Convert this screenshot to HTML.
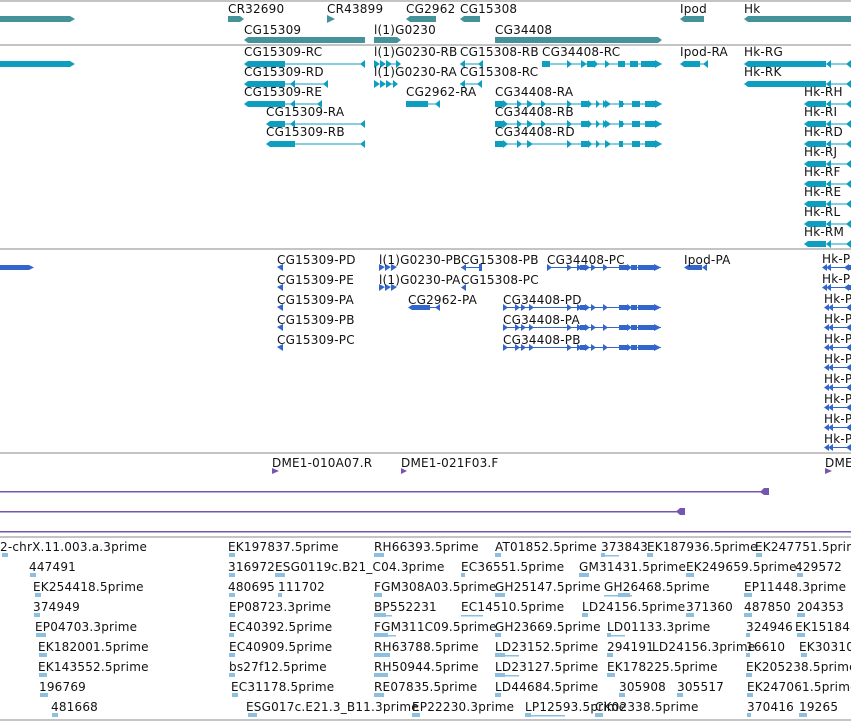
<!DOCTYPE html>
<html><head><meta charset="utf-8"><style>
html,body{margin:0;padding:0;background:#fff;width:851px;height:721px;overflow:hidden}
svg{display:block}
text{font-family:"DejaVu Sans","Liberation Sans",sans-serif;font-size:12px;fill:#111;letter-spacing:0.2px}
</style></head><body>
<svg width="851" height="721" viewBox="0 0 851 721" xmlns="http://www.w3.org/2000/svg">
<g fill="#c4c4c4">
<rect x="0" y="0" width="851" height="2"/>
<rect x="0" y="44" width="851" height="2"/>
<rect x="0" y="248" width="851" height="2"/>
<rect x="0" y="452" width="851" height="2"/>
<rect x="0" y="536" width="851" height="2"/>
<rect x="0" y="719" width="851" height="2"/>
</g>

<g fill="#44939a">
<rect x="0" y="16" width="70" height="6"/><polygon points="70,16 75,19 70,22"/>
<rect x="228" y="16" width="12" height="6"/><polygon points="240,16 244,19 240,22"/>
<polygon points="327,15 335,19 327,23"/>
<rect x="410" y="16" width="26" height="6"/><polygon points="410,16 406,19 410,22"/>
<rect x="464" y="16" width="16" height="6"/><polygon points="464,16 460,19 464,22"/>
<rect x="684" y="16" width="20" height="6"/><polygon points="684,16 680,19 684,22"/>
<rect x="748" y="16" width="103" height="6"/><polygon points="748,16 744,19 748,22"/>
<rect x="248" y="37" width="117" height="6"/><polygon points="248,37 244,40 248,43"/>
<rect x="374" y="37" width="23" height="6"/><polygon points="397,37 401,40 397,43"/>
<rect x="495" y="37" width="163" height="6"/><polygon points="658,37 662,40 658,43"/>
</g>
<text x="228" y="13">CR32690</text><text x="327" y="13">CR43899</text><text x="406" y="13">CG2962</text><text x="460" y="13">CG15308</text><text x="680" y="13">Ipod</text><text x="744" y="13">Hk</text>
<text x="244" y="34">CG15309</text><text x="374" y="34">l(1)G0230</text><text x="495" y="34">CG34408</text>

<g fill="#0e9fc0">
<rect x="0" y="61" width="70" height="6"/><polygon points="70,61 75,64 70,67"/>
<rect x="248" y="61" width="37" height="6"/><polygon points="248,61 244,64 248,67"/><rect x="285" y="63.5" width="80" height="1"/><polygon points="360,64 365,60 365,68"/>
<rect x="248" y="81" width="37" height="6"/><polygon points="248,81 244,84 248,87"/><rect x="285" y="83.5" width="43" height="1"/><polygon points="290,84 295,80 295,88"/><polygon points="323,84 328,80 328,88"/>
<rect x="248" y="101" width="37" height="6"/><polygon points="248,101 244,104 248,107"/><rect x="285" y="103.5" width="37" height="1"/><polygon points="290,104 295,100 295,108"/><polygon points="317,104 322,100 322,108"/>
<rect x="270" y="121" width="15" height="6"/><polygon points="270,121 266,124 270,127"/><rect x="285" y="123.5" width="80" height="1"/><polygon points="290,124 295,120 295,128"/><polygon points="360,124 365,120 365,128"/>
<rect x="270" y="141" width="25" height="6"/><polygon points="270,141 266,144 270,147"/><rect x="295" y="143.5" width="70" height="1"/><polygon points="360,144 365,140 365,148"/>
<polygon points="374,60 380,64 380,60 386,64 380,68 380,64 374,68"/><polygon points="386,60 392,64 386,68"/><rect x="386" y="63.5" width="11" height="1"/><polygon points="396,60 401,64 396,68"/>
<polygon points="374,80 380,84 380,80 386,84 380,88 380,84 374,88"/><polygon points="386,80 392,84 386,88"/><rect x="386" y="83.5" width="8" height="1"/><polygon points="393,80 398,84 393,88"/>
<rect x="460" y="63.5" width="23" height="1"/><polygon points="460,64 465,60 465,68"/><polygon points="478,64 483,60 483,68"/>
<rect x="460" y="83.5" width="22" height="1"/><polygon points="460,84 465,80 465,88"/><polygon points="477,84 482,80 482,88"/>
<rect x="406" y="101" width="22" height="6"/><rect x="428" y="103.5" width="12" height="1"/><polygon points="435,104 440,100 440,108"/>
<rect x="684" y="61" width="16" height="6"/><polygon points="684,61 680,64 684,67"/><rect x="700" y="63.5" width="8" height="1"/><polygon points="703,64 708,60 708,68"/>
<rect x="542" y="63.5" width="120" height="1"/>
<rect x="542" y="61" width="8" height="6"/><polygon points="567,60 572,64 567,68"/><polygon points="581,60 587,64 581,68"/><rect x="587" y="61" width="7" height="6"/><polygon points="594,60 598,64 594,68"/><polygon points="605,60 610,64 605,68"/><rect x="618" y="61" width="7" height="6"/><rect x="630" y="61" width="8" height="6"/><rect x="641" y="61" width="14" height="6"/><polygon points="655,60 662,64 655,68"/>
</g>
<g fill="#0e9fc0">
<g id="cgA">
<rect x="495" y="103.5" width="167" height="1"/>
<rect x="495" y="101" width="8" height="6"/><polygon points="503,100 508,104 503,108"/><polygon points="517,100 522,104 517,108"/><polygon points="527,100 533,104 527,108"/><polygon points="541,100 546,104 541,108"/><polygon points="567,100 572,104 567,108"/><rect x="581" y="101" width="7" height="6"/><polygon points="588,100 592,104 588,108"/><polygon points="596,100 600,104 596,108"/><polygon points="603,100 607,104 603,108"/><polygon points="605,100 611,104 605,108"/><polygon points="619,100 625,104 619,108"/><rect x="619" y="101" width="4" height="6"/><rect x="632" y="101" width="8" height="6"/><rect x="645" y="101" width="10" height="6"/><polygon points="655,100 662,104 655,108"/>
</g>
<use href="#cgA" y="20"/>
<g transform="translate(0,40)">
<rect x="495" y="103.5" width="167" height="1"/>
<rect x="495" y="101" width="8" height="6"/><polygon points="503,100 508,104 503,108"/><polygon points="517,100 522,104 517,108"/><polygon points="527,100 533,104 527,108"/><polygon points="567,100 572,104 567,108"/><rect x="581" y="101" width="7" height="6"/><polygon points="588,100 592,104 588,108"/><polygon points="596,100 600,104 596,108"/><polygon points="605,100 611,104 605,108"/><rect x="619" y="101" width="4" height="6"/><rect x="632" y="101" width="8" height="6"/><rect x="645" y="101" width="10" height="6"/><polygon points="655,100 662,104 655,108"/>
</g>
<rect x="748" y="81" width="78" height="6"/><polygon points="748,81 744,84 748,87"/><rect x="826" y="83.5" width="25" height="1"/><polygon points="826,84 831,80 831,88"/><polygon points="846,84 851,80 851,88"/>
<rect x="748" y="61" width="78" height="6"/><polygon points="748,61 744,64 748,67"/><rect x="826" y="63.5" width="25" height="1"/><polygon points="826,64 831,60 831,68"/><polygon points="846,64 851,60 851,68"/>
<g id="hkr"><rect x="808" y="101" width="18" height="6"/><polygon points="808,101 804,104 808,107"/><rect x="826" y="103.5" width="25" height="1"/><polygon points="826,104 831,100 831,108"/><polygon points="846,104 851,100 851,108"/></g>
<use href="#hkr" y="20"/><use href="#hkr" y="40"/><use href="#hkr" y="60"/><use href="#hkr" y="80"/><use href="#hkr" y="100"/><use href="#hkr" y="120"/><use href="#hkr" y="140"/>
</g>
<text x="244" y="56">CG15309-RC</text><text x="374" y="56">l(1)G0230-RB</text><text x="460" y="56">CG15308-RB</text><text x="542" y="56">CG34408-RC</text><text x="680" y="56">Ipod-RA</text><text x="744" y="56">Hk-RG</text>
<text x="244" y="76">CG15309-RD</text><text x="374" y="76">l(1)G0230-RA</text><text x="460" y="76">CG15308-RC</text><text x="744" y="76">Hk-RK</text>
<text x="244" y="96">CG15309-RE</text><text x="406" y="96">CG2962-RA</text><text x="495" y="96">CG34408-RA</text><text x="804" y="96">Hk-RH</text>
<text x="266" y="116">CG15309-RA</text><text x="495" y="116">CG34408-RB</text><text x="804" y="116">Hk-RI</text>
<text x="266" y="136">CG15309-RB</text><text x="495" y="136">CG34408-RD</text><text x="804" y="136">Hk-RD</text>
<text x="804" y="156">Hk-RJ</text><text x="804" y="176">Hk-RF</text><text x="804" y="196">Hk-RE</text><text x="804" y="216">Hk-RL</text><text x="804" y="236">Hk-RM</text>

<g fill="#3366cc">
<rect x="0" y="265" width="29" height="5"/><polygon points="29,265 34,267.5 29,270"/>
<polygon points="277,267 283,264 283,271"/><polygon points="277,287 283,284 283,291"/><polygon points="277,307 283,304 283,311"/><polygon points="277,327 283,324 283,331"/><polygon points="277,347 283,344 283,351"/>
<polygon points="379,264 385,267 385,264 391,267 385,271 385,267 379,271"/><polygon points="391,264 397,267 391,271"/>
<polygon points="379,284 385,287 385,284 391,287 385,291 385,287 379,291"/><polygon points="391,284 397,287 391,291"/>
<rect x="461" y="267" width="21" height="1"/><polygon points="461,267.5 466,264 466,271"/><rect x="479" y="264" width="3" height="7"/>
<polygon points="461,287.5 466,284 466,291"/>
<rect x="412" y="305" width="18" height="5"/><polygon points="412,305 408,307.5 412,310"/><rect x="430" y="307" width="10" height="1"/><polygon points="435,307.5 440,304 440,311"/>
<rect x="688" y="265" width="14" height="5"/><polygon points="688,265 684,267.5 688,270"/><polygon points="702,267.5 707,264 707,271"/>
<g id="pc"><rect x="547" y="267" width="114" height="1"/><polygon points="547,264 552,267.5 547,271"/><polygon points="567,264 572,267.5 567,271"/><polygon points="577,264 582,267.5 577,271"/><rect x="580" y="265" width="5" height="5"/><polygon points="585,264 590,267.5 585,271"/><polygon points="591,264 596,267.5 591,271"/><polygon points="603,264 608,267.5 603,271"/><rect x="619" y="265" width="8" height="5"/><polygon points="627,264 632,267.5 627,271"/><rect x="631" y="265" width="6" height="5"/><rect x="638" y="265" width="16" height="5"/><polygon points="654,264 661,267.5 654,271"/></g>
<g id="pd"><rect x="503" y="307" width="158" height="1"/><polygon points="503,304 508,307.5 503,311"/><polygon points="515,304 520,307.5 515,311"/><polygon points="521,304 526,307.5 521,311"/><polygon points="529,304 534,307.5 529,311"/><polygon points="567,304 572,307.5 567,311"/><polygon points="577,304 582,307.5 577,311"/><rect x="580" y="305" width="5" height="5"/><polygon points="585,304 590,307.5 585,311"/><polygon points="591,304 596,307.5 591,311"/><polygon points="603,304 608,307.5 603,311"/><rect x="619" y="305" width="8" height="5"/><polygon points="627,304 632,307.5 627,311"/><rect x="631" y="305" width="6" height="5"/><rect x="638" y="305" width="16" height="5"/><polygon points="654,304 661,307.5 654,311"/></g>
<use href="#pd" y="20"/><use href="#pd" y="40"/>
<g id="hp"><polygon points="822,267.5 827,264 827,271"/><polygon points="826,267.5 831,264 831,271"/><rect x="831" y="267" width="20" height="1"/><polygon points="844,267.5 849,264 849,271"/><rect x="848" y="265" width="3" height="5"/></g>
<use href="#hp" y="20"/><use href="#hp" x="2" y="40"/><use href="#hp" x="2" y="60"/><use href="#hp" x="2" y="80"/><use href="#hp" x="2" y="100"/><use href="#hp" x="2" y="120"/><use href="#hp" x="2" y="140"/><use href="#hp" x="2" y="160"/><use href="#hp" x="2" y="180"/>
</g>
<text x="277" y="264">CG15309-PD</text><text x="379" y="264">l(1)G0230-PB</text><text x="461" y="264">CG15308-PB</text><text x="547" y="264">CG34408-PC</text><text x="684" y="264">Ipod-PA</text>
<text x="277" y="284">CG15309-PE</text><text x="379" y="284">l(1)G0230-PA</text><text x="461" y="284">CG15308-PC</text>
<text x="277" y="304">CG15309-PA</text><text x="408" y="304">CG2962-PA</text><text x="503" y="304">CG34408-PD</text>
<text x="277" y="324">CG15309-PB</text><text x="503" y="324">CG34408-PA</text>
<text x="277" y="344">CG15309-PC</text><text x="503" y="344">CG34408-PB</text>
<text x="822" y="263">Hk-PG</text><text x="822" y="283">Hk-PK</text><text x="824" y="303">Hk-PH</text><text x="824" y="323">Hk-PI</text><text x="824" y="343">Hk-PD</text><text x="824" y="363">Hk-PJ</text><text x="824" y="383">Hk-PF</text><text x="824" y="403">Hk-PE</text><text x="824" y="423">Hk-PL</text><text x="824" y="443">Hk-PM</text>

<g fill="#7455b0">
<polygon points="272,468 279,471 272,474"/><polygon points="401,468 407,471 401,474"/><polygon points="825,468 832,471 825,474"/>
<rect x="0" y="491" width="762" height="1.5"/><polygon points="760,492 764,488 769,488 769,495 764,495"/>
<rect x="0" y="511" width="680" height="1.5"/><polygon points="676,511.5 680,508 685,508 685,515 680,515"/>
<rect x="0" y="531" width="851" height="1.5"/>
</g>
<text x="272" y="467">DME1-010A07.R</text><text x="401" y="467">DME1-021F03.F</text><text x="825" y="467">DME1</text>

<g fill="#8cbfe0">
<rect x="2" y="553" width="6" height="4"/><rect x="30" y="573" width="6" height="4"/><rect x="35" y="593" width="6" height="4"/><rect x="34" y="613" width="6" height="4"/><rect x="36" y="633" width="10" height="4"/><rect x="39" y="653" width="8" height="4"/><rect x="39" y="673" width="8" height="4"/><rect x="40" y="693" width="8" height="4"/><rect x="52" y="713" width="6" height="4"/>
<rect x="229" y="553" width="6" height="4"/><rect x="229" y="573" width="6" height="4"/><rect x="275" y="573" width="10" height="4"/><rect x="229" y="593" width="6" height="4"/><rect x="278" y="593" width="4" height="4"/><rect x="229" y="613" width="6" height="4"/><rect x="229" y="633" width="5" height="4"/><rect x="229" y="653" width="6" height="4"/><rect x="229" y="673" width="6" height="4"/><rect x="232" y="693" width="6" height="4"/><rect x="248" y="713" width="9" height="4"/>
<rect x="374" y="553" width="10" height="4"/><rect x="461" y="573" width="4" height="4"/><rect x="374" y="593" width="8" height="4"/><rect x="374" y="615" width="18" height="1.5"/><rect x="374" y="613" width="12" height="4"/><rect x="461" y="615" width="22" height="1.5"/><rect x="374" y="635" width="22" height="1.5"/><rect x="374" y="633" width="14" height="4"/><rect x="374" y="653" width="16" height="4"/><rect x="374" y="673" width="14" height="4"/><rect x="374" y="693" width="10" height="4"/><rect x="412" y="713" width="8" height="4"/>
<rect x="495" y="553" width="6" height="4"/><rect x="495" y="593" width="10" height="4"/><rect x="495" y="633" width="6" height="4"/><rect x="495" y="655" width="24" height="1.5"/><rect x="495" y="653" width="10" height="4"/><rect x="495" y="675" width="24" height="1.5"/><rect x="495" y="673" width="10" height="4"/><rect x="495" y="693" width="6" height="4"/><rect x="525" y="715" width="40" height="1.5"/><rect x="525" y="713" width="6" height="4"/><rect x="595" y="713" width="8" height="4"/>
<rect x="601" y="555" width="18" height="1.5"/><rect x="601" y="553" width="4" height="4"/><rect x="647" y="553" width="6" height="4"/><rect x="756" y="553" width="6" height="4"/><rect x="579" y="573" width="10" height="4"/><rect x="686" y="573" width="8" height="4"/><rect x="797" y="573" width="6" height="4"/><rect x="604" y="595" width="28" height="1.5"/><rect x="618" y="593" width="12" height="4"/><rect x="744" y="593" width="8" height="4"/><rect x="582" y="613" width="6" height="4"/><rect x="686" y="613" width="8" height="4"/><rect x="744" y="613" width="8" height="4"/><rect x="797" y="613" width="8" height="4"/><rect x="607" y="635" width="18" height="1.5"/><rect x="607" y="633" width="4" height="4"/><rect x="746" y="633" width="4" height="4"/><rect x="797" y="633" width="8" height="4"/><rect x="607" y="653" width="6" height="4"/><rect x="746" y="653" width="4" height="4"/><rect x="801" y="653" width="6" height="4"/><rect x="607" y="673" width="8" height="4"/><rect x="746" y="673" width="6" height="4"/><rect x="619" y="693" width="6" height="4"/><rect x="677" y="693" width="6" height="4"/><rect x="747" y="693" width="6" height="4"/><rect x="747" y="713" width="4" height="4"/><rect x="799" y="713" width="8" height="4"/>
</g>
<text x="0" y="551">2-chrX.11.003.a.3prime</text><text x="29" y="571">447491</text><text x="33" y="591">EK254418.5prime</text><text x="33" y="611">374949</text><text x="35" y="631">EP04703.3prime</text><text x="38" y="651">EK182001.5prime</text><text x="38" y="671">EK143552.5prime</text><text x="39" y="691">196769</text><text x="51" y="711">481668</text>
<text x="228" y="551">EK197837.5prime</text><text x="228" y="571">316972</text><text x="275" y="571">ESG0119c.B21_C04.3prime</text><text x="228" y="591">480695</text><text x="278" y="591">111702</text><text x="229" y="611">EP08723.3prime</text><text x="229" y="631">EC40392.5prime</text><text x="229" y="651">EC40909.5prime</text><text x="229" y="671">bs27f12.5prime</text><text x="231" y="691">EC31178.5prime</text><text x="246" y="711">ESG017c.E21.3_B11.3prime</text>
<text x="374" y="551">RH66393.5prime</text><text x="461" y="571">EC36551.5prime</text><text x="374" y="591">FGM308A03.5prime</text><text x="374" y="611">BP552231</text><text x="461" y="611">EC14510.5prime</text><text x="374" y="631">FGM311C09.5prime</text><text x="374" y="651">RH63788.5prime</text><text x="374" y="671">RH50944.5prime</text><text x="374" y="691">RE07835.5prime</text><text x="412" y="711">EP22230.3prime</text>
<text x="495" y="551">AT01852.5prime</text><text x="495" y="591">GH25147.5prime</text><text x="579" y="571">GM31431.5prime</text><text x="495" y="631">GH23669.5prime</text><text x="495" y="651">LD23152.5prime</text><text x="495" y="671">LD23127.5prime</text><text x="495" y="691">LD44684.5prime</text><text x="525" y="711">LP12593.5prime</text><text x="595" y="711">CK02338.5prime</text>
<text x="601" y="551">373843</text><text x="647" y="551">EK187936.5prime</text><text x="755" y="551">EK247751.5prime</text>
<text x="686" y="571">EK249659.5prime</text><text x="795" y="571">429572</text>
<text x="604" y="591">GH26468.5prime</text><text x="744" y="591">EP11448.3prime</text>
<text x="582" y="611">LD24156.5prime</text><text x="686" y="611">371360</text><text x="744" y="611">487850</text><text x="797" y="611">204353</text>
<text x="607" y="631">LD01133.3prime</text><text x="746" y="631">324946</text><text x="795" y="631">EK151845.5prime</text>
<text x="607" y="651">294191</text><text x="652" y="651">LD24156.3prime</text><text x="746" y="651">16610</text><text x="799" y="651">EK303105.5prime</text>
<text x="607" y="671">EK178225.5prime</text><text x="746" y="671">EK205238.5prime</text>
<text x="619" y="691">305908</text><text x="677" y="691">305517</text><text x="747" y="691">EK247061.5prime</text>
<text x="747" y="711">370416</text><text x="799" y="711">19265</text>
</svg>
</body></html>
